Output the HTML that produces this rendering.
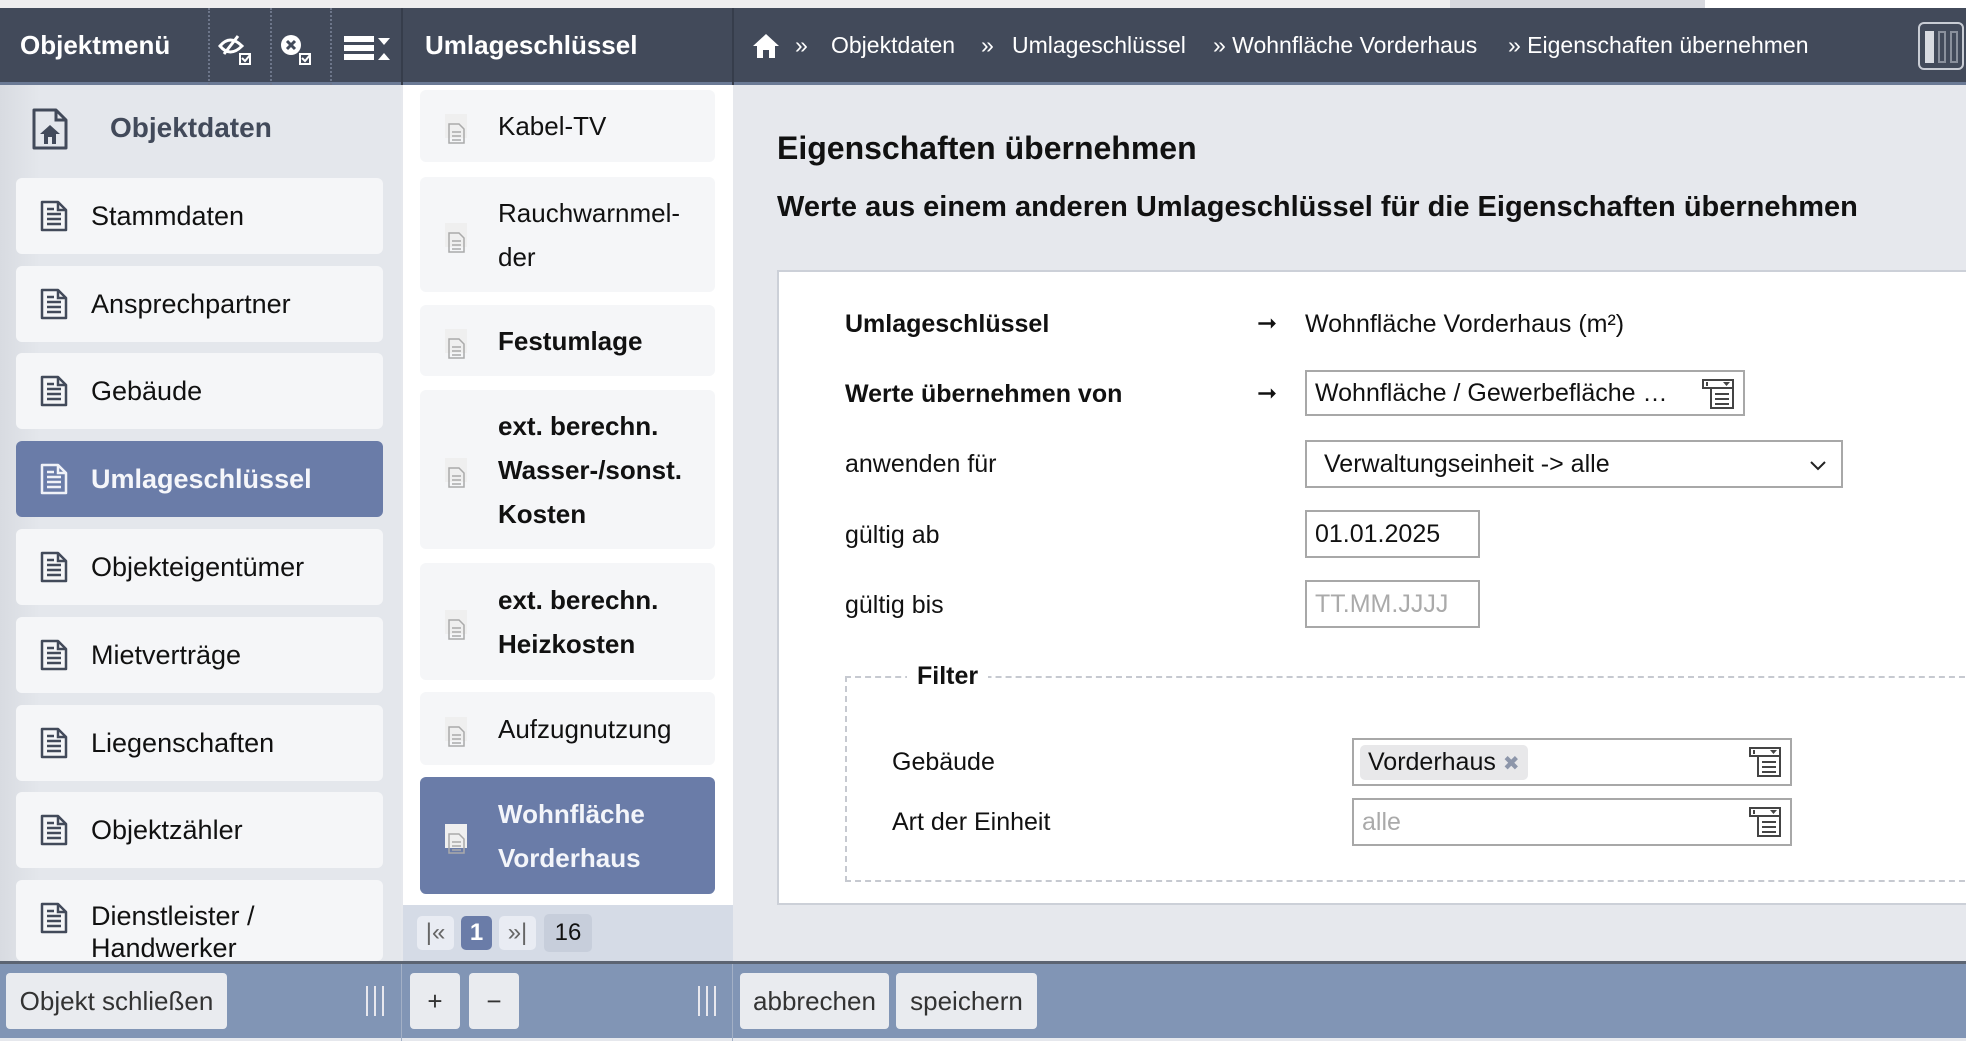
<!DOCTYPE html>
<html><head><meta charset="utf-8"><style>
*{box-sizing:border-box;margin:0;padding:0}
body{width:1966px;height:1038px;overflow:hidden;font-family:"Liberation Sans",Arial,sans-serif;background:#e6e8ed;position:relative;color:#111}
.abs{position:absolute}
.top{left:0;top:0;width:1966px;height:8px;background:#eeeeef}
.hdr{left:0;top:8px;width:1966px;height:77px;background:#424a5a;border-bottom:3px solid #6b7a95;color:#fff}
.hdr .t{position:absolute;top:22px;font-size:26px;font-weight:bold}
.sep{position:absolute;top:0;height:77px;border-left:2px dotted #6d768a}
.sepl{position:absolute;top:0;height:77px;border-left:2px solid #363d4b}
.bc{position:absolute;top:24px;font-size:23px;color:#fff;white-space:nowrap}
.left{left:0;top:85px;width:401px;height:876px;background:linear-gradient(90deg,#d8dbe1,#e4e7ec 40px)}
.li{position:absolute;left:16px;width:367px;height:76px;background:#f5f6f8;border-radius:6px;font-size:27px;display:flex;align-items:center;padding-left:75px}
.li svg{position:absolute;left:24px;top:22px}
.li.act{background:#6a7ca8;color:#f5f6fa;font-weight:bold}
.mid{left:403px;top:85px;width:330px;height:820px;background:#fff}
.mi{position:absolute;left:420px;width:295px;background:#f5f6f8;border-radius:6px;font-size:26px;line-height:44px;padding-left:78px;display:flex;align-items:center}
.mi .ic{position:absolute;left:25px;top:50%;margin-top:-12px;width:22px;height:24px;background:#efefef}
.mi.act{background:#6a7ca8;color:#f3f5fa;font-weight:bold}
.pag{left:403px;top:905px;width:330px;height:56px;background:#d5dbe6}
.pb{position:absolute;top:11px;height:34px;border-radius:5px;background:#e9ecf3;color:#666;font-size:24px;text-align:center;line-height:34px}
.bot{left:0;top:961px;width:1966px;height:77px;background:#8195b5;border-top:3px solid #5c6472}
.btn{position:absolute;top:9px;height:56px;background:#e9ebef;border-radius:4px;font-size:26px;line-height:56px;text-align:center;color:#333}
.grip{position:absolute;top:22px;width:18px;height:30px;border-left:2px solid #e8e8ee;border-right:2px solid #e8e8ee}
.grip:after{content:"";position:absolute;left:6px;top:0;width:2px;height:30px;background:#e8e8ee}
.panel{left:777px;top:270px;width:1189px;height:635px;background:#fff;border:2px solid #ccd0d8;border-right:none}
.lab{position:absolute;font-size:25px}
.b{font-weight:bold}
.inp{position:absolute;border:2px solid #a8a8a8;background:#fff;font-size:25px;padding-left:8px;display:flex;align-items:center}
.arr{position:absolute;font-size:24px}
.li2{position:absolute;right:8px;top:6px}
</style></head><body>
<div class="abs top"><div class="abs" style="left:1450px;top:0;width:255px;height:8px;background:#d7d9df"></div><div class="abs" style="left:1705px;top:0;width:261px;height:8px;background:#fff"></div></div>
<div class="abs hdr">
 <div class="t" style="left:20px">Objektmenü</div>
 <div class="sep" style="left:208px"></div><div class="sep" style="left:270px"></div><div class="sep" style="left:330px"></div>
 <svg class="abs" style="left:218px;top:24px" width="40" height="40" viewBox="0 0 40 40"><path d="M2 14 Q12 2 24 14 Q12 26 2 14Z" fill="none" stroke="#fff" stroke-width="3"/><path d="M6 22 L20 4" stroke="#fff" stroke-width="3"/><rect x="22" y="22" width="10" height="10" fill="none" stroke="#fff" stroke-width="2"/><path d="M24 26l3 3 5-6" fill="none" stroke="#fff" stroke-width="2"/></svg>
 <svg class="abs" style="left:280px;top:24px" width="40" height="40" viewBox="0 0 40 40"><circle cx="11" cy="13" r="10" fill="#fff"/><path d="M7 9l8 8M15 9l-8 8" stroke="#424a5a" stroke-width="3"/><rect x="20" y="22" width="10" height="10" fill="none" stroke="#fff" stroke-width="2"/><path d="M22 26l3 3 5-6" fill="none" stroke="#fff" stroke-width="2"/></svg>
 <svg class="abs" style="left:344px;top:28px" width="48" height="28" viewBox="0 0 48 28"><rect x="0" y="0" width="30" height="6" fill="#fff"/><rect x="0" y="9" width="30" height="6" fill="#fff"/><rect x="0" y="18" width="30" height="6" fill="#fff"/><path d="M34 2h12l-6 7z M34 24h12l-6-7z" fill="#fff"/></svg>
 <div class="sepl" style="left:401px"></div>
 <div class="t" style="left:425px">Umlageschlüssel</div>
 <div class="sepl" style="left:732px"></div>
 <svg class="abs" style="left:752px;top:24px" width="28" height="28" viewBox="0 0 28 28"><path d="M14 2 L27 14 L23 14 L23 26 L17 26 L17 18 L11 18 L11 26 L5 26 L5 14 L1 14Z" fill="#fff"/></svg>
 <div class="bc" style="left:795px">»</div><div class="bc" style="left:831px">Objektdaten</div>
 <div class="bc" style="left:981px">»</div><div class="bc" style="left:1012px">Umlageschlüssel</div>
 <div class="bc" style="left:1213px">» Wohnfläche Vorderhaus</div>
 <div class="bc" style="left:1508px">» Eigenschaften übernehmen</div>
 <div class="abs" style="left:1918px;top:14px;width:46px;height:48px;border:2px solid #c8ccd4;border-radius:6px"><div class="abs" style="left:5px;top:7px;width:9px;height:32px;background:#d8dbe1"></div><div class="abs" style="left:18px;top:7px;width:8px;height:32px;border:2px solid #8a909c"></div><div class="abs" style="left:30px;top:7px;width:8px;height:32px;border:2px solid #8a909c"></div></div>
</div>

<div class="abs left">
 <svg class="abs" style="left:31px;top:22px" width="38" height="44" viewBox="0 0 38 44"><path d="M3 3h22l10 10v28H3z" fill="none" stroke="#424a5a" stroke-width="3" stroke-linejoin="round"/><path d="M25 3v10h10" fill="none" stroke="#424a5a" stroke-width="3"/><path d="M19 18l-10 9h4v10h12V27h4z" fill="#424a5a"/><rect x="17" y="30" width="4" height="7" fill="#e4e7ec"/></svg>
 <div class="abs" style="left:110px;top:27px;font-size:28px;font-weight:bold;color:#424a5a">Objektdaten</div>
</div>
<div class="abs mid"></div>
<div id="lis"></div>
<div class="abs pag">
 <div class="pb" style="left:14px;width:37px">|«</div>
 <div class="pb" style="left:58px;width:31px;background:#6a7ca8;color:#fff;font-weight:bold">1</div>
 <div class="pb" style="left:96px;width:37px">»|</div>
 <div class="pb" style="left:141px;width:48px;background:#c7cedb;color:#111;top:9px;height:38px;line-height:38px">16</div>
</div>

<div class="abs" style="left:777px;top:130px;font-size:32px;font-weight:bold">Eigenschaften übernehmen</div>
<div class="abs" style="left:777px;top:191px;font-size:29px;font-weight:bold">Werte aus einem anderen Umlageschlüssel für die Eigenschaften übernehmen</div>

<div class="abs panel">
 <div class="lab b" style="left:66px;top:38px">Umlageschlüssel</div>
 <div class="arr" style="left:478px;top:37px">➞</div>
 <div class="lab" style="left:526px;top:38px">Wohnfläche Vorderhaus (m²)</div>
 <div class="lab b" style="left:66px;top:108px">Werte übernehmen von</div>
 <div class="arr" style="left:478px;top:107px">➞</div>
 <div class="inp" style="left:526px;top:98px;width:440px;height:46px">Wohnfläche / Gewerbefläche …<svg class="li2" width="34" height="32" viewBox="0 0 34 32"><path d="M2 2h30v8H2z M10 10v20h22V10" fill="none" stroke="#444" stroke-width="2"/><path d="M14 16h14M14 21h14M14 26h14" stroke="#444" stroke-width="2"/><path d="M22 4h7l-3.5 4z" fill="#444"/><path d="M6 4v4" stroke="#444" stroke-width="2"/></svg></div>
 <div class="lab" style="left:66px;top:178px">anwenden für</div>
 <div class="inp" style="left:526px;top:168px;width:538px;height:48px;padding-left:17px">Verwaltungseinheit -&gt; alle<svg class="abs" style="right:14px;top:18px" width="18" height="12" viewBox="0 0 18 12"><path d="M2 2l7 7 7-7" fill="none" stroke="#222" stroke-width="2"/></svg></div>
 <div class="lab" style="left:66px;top:249px">gültig ab</div>
 <div class="inp" style="left:526px;top:238px;width:175px;height:48px">01.01.2025</div>
 <div class="lab" style="left:66px;top:319px">gültig bis</div>
 <div class="inp" style="left:526px;top:308px;width:175px;height:48px;color:#aaa">TT.MM.JJJJ</div>
 <div class="abs" style="left:66px;top:404px;width:1130px;height:206px;border:2px dashed #c6c9d0;border-right:none"></div>
 <div class="lab b" style="left:128px;top:390px;background:#fff;padding:0 10px">Filter</div>
 <div class="lab" style="left:113px;top:476px">Gebäude</div>
 <div class="inp" style="left:573px;top:466px;width:440px;height:48px;padding-left:6px"><span style="background:#e8e8ea;border-radius:5px;padding:3px 8px">Vorderhaus <span style="color:#8d96aa;font-size:20px">✖</span></span><svg class="li2" width="34" height="32" viewBox="0 0 34 32"><path d="M2 2h30v8H2z M10 10v20h22V10" fill="none" stroke="#444" stroke-width="2"/><path d="M14 16h14M14 21h14M14 26h14" stroke="#444" stroke-width="2"/><path d="M22 4h7l-3.5 4z" fill="#444"/><path d="M6 4v4" stroke="#444" stroke-width="2"/></svg></div>
 <div class="lab" style="left:113px;top:536px">Art der Einheit</div>
 <div class="inp" style="left:573px;top:526px;width:440px;height:48px;color:#aaa">alle<svg class="li2" width="34" height="32" viewBox="0 0 34 32"><path d="M2 2h30v8H2z M10 10v20h22V10" fill="none" stroke="#444" stroke-width="2"/><path d="M14 16h14M14 21h14M14 26h14" stroke="#444" stroke-width="2"/><path d="M22 4h7l-3.5 4z" fill="#444"/><path d="M6 4v4" stroke="#444" stroke-width="2"/></svg></div>
</div>

<div class="abs bot">
 <div class="btn" style="left:6px;width:221px">Objekt schließen</div>
 <div class="grip" style="left:366px"></div>
 <div class="abs" style="left:401px;top:0;width:1px;height:77px;background:#a3b0c6"></div>
 <div class="btn" style="left:410px;width:50px">+</div>
 <div class="btn" style="left:469px;width:50px">−</div>
 <div class="grip" style="left:698px"></div>
 <div class="abs" style="left:732px;top:0;width:1px;height:77px;background:#a3b0c6"></div>
 <div class="btn" style="left:740px;width:149px">abbrechen</div>
 <div class="btn" style="left:896px;width:141px">speichern</div>
</div>

<script>
var doc='<svg width="28" height="32" viewBox="0 0 28 32"><path d="M2 2h16l8 8v20H2z" fill="none" stroke="COL" stroke-width="2.5" stroke-linejoin="round"/><path d="M18 2v8h8" fill="none" stroke="COL" stroke-width="2.5"/><path d="M7 14h14M7 19h14M7 24h14M7 9h7" stroke="COL" stroke-width="2.5"/></svg>';
var L=[["Stammdaten",178],["Ansprechpartner",266],["Gebäude",353],["Umlageschlüssel",441,1],["Objekteigentümer",529],["Mietverträge",617],["Liegenschaften",705],["Objektzähler",792],["Dienstleister /<br>Handwerker",880]];
var h='';
L.forEach(function(x){h+='<div class="li'+(x[2]?' act':'')+'" style="top:'+x[1]+'px'+(x[0].indexOf('<br>')>0?';line-height:32px;align-items:flex-start;padding-top:20px;overflow:hidden;height:81px':'')+'">'+doc.replace(/COL/g,x[2]?'#f0f2f8':'#424a5a')+'<div>'+x[0]+'</div></div>';});
var M=[["Kabel-TV",90,72],["Rauchwarnmel-<br>der",177,115],["<b>Festumlage</b>",305,71],["<b>ext. berechn.<br>Wasser-/sonst.<br>Kosten</b>",390,159],["<b>ext. berechn.<br>Heizkosten</b>",563,117],["Aufzugnutzung",692,73],["Wohnfläche<br>Vorderhaus",777,117,1]];
M.forEach(function(x){h+='<div class="mi'+(x[3]?' act':'')+'" style="top:'+x[1]+'px;height:'+x[2]+'px"><span class="ic"><svg width="22" height="24" viewBox="0 0 22 24"><path d="M4 3h10l5 5v14H4z" fill="none" stroke="#aaa" stroke-width="1.5"/><path d="M7 11h9M7 15h9M7 19h9" stroke="#aaa" stroke-width="1.5"/></svg></span><div>'+x[0]+'</div></div>';});
document.getElementById('lis').innerHTML=h;
</script>
</body></html>
